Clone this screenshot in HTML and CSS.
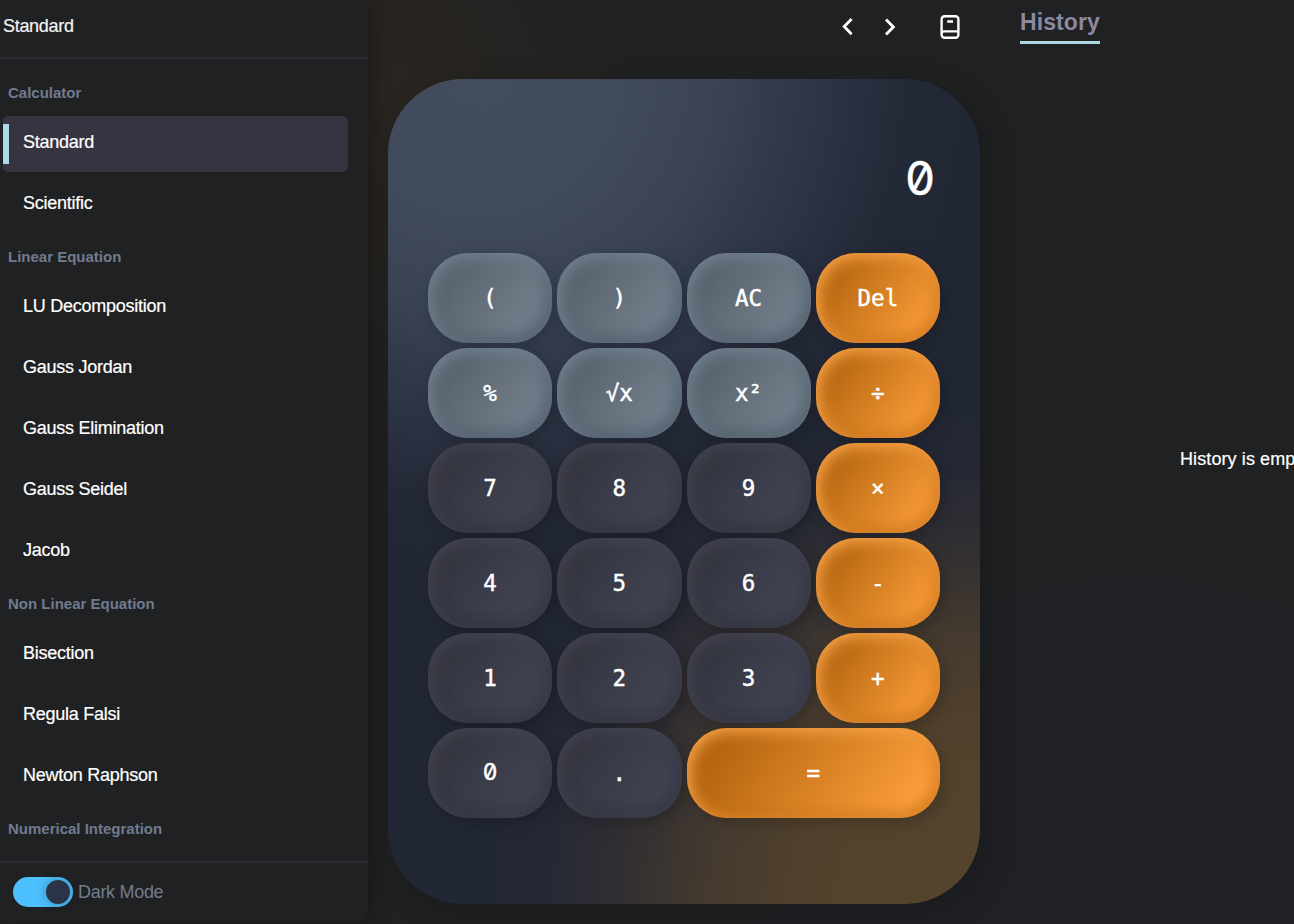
FILE: index.html
```html
<!DOCTYPE html>
<html lang="en">
<head>
<meta charset="utf-8">
<title>Calculator</title>
<link rel="stylesheet" href="styles.css">
</head>
<body>
<div class="app">
  <aside class="sidebar">
    <header class="sidebar-title">Standard</header>
    <nav class="menu">
      <h2 class="group">Calculator</h2>
      <a class="item active">Standard</a>
      <a class="item">Scientific</a>
      <h2 class="group">Linear Equation</h2>
      <a class="item">LU Decomposition</a>
      <a class="item">Gauss Jordan</a>
      <a class="item">Gauss Elimination</a>
      <a class="item">Gauss Seidel</a>
      <a class="item">Jacob</a>
      <h2 class="group">Non Linear Equation</h2>
      <a class="item">Bisection</a>
      <a class="item">Regula Falsi</a>
      <a class="item">Newton Raphson</a>
      <h2 class="group">Numerical Integration</h2>
    </nav>
    <footer class="mode">
      <span class="switch"><span class="knob"></span></span>
      <span class="mode-label">Dark Mode</span>
    </footer>
  </aside>

  <main class="center">
    <div class="toolbar">
      <svg class="icon" viewBox="0 0 24 24"><path d="M15.600 4 8.200 11.600l7.400 7.600"/></svg>
      <svg class="icon icon-next" viewBox="0 0 24 24"><path d="M9 4.600 16.400 12l-7.400 7.600"/></svg>
      <svg class="icon icon-book" viewBox="0 0 24 28"><path d="M6.600 3.200h10.800a3 3 0 0 1 3 3v15.600a3 3 0 0 1-3 3H6.600a3 3 0 0 1-3-3V6.200a3 3 0 0 1 3-3ZM3.600 20.600a2.400 2.400 0 0 1 2.400-2.200h14.400M9.200 8.500h5.800"/></svg>
    </div>
    <section class="calculator">
      <div class="display zero">0</div>
      <div class="keys">
        <button class="key grey">(</button><button class="key grey">)</button><button class="key grey">AC</button><button class="key orange">Del</button>
        <button class="key grey">%</button><button class="key grey">√x</button><button class="key grey">x²</button><button class="key orange">÷</button>
        <button class="key">7</button><button class="key">8</button><button class="key">9</button><button class="key orange">×</button>
        <button class="key">4</button><button class="key">5</button><button class="key">6</button><button class="key orange">-</button>
        <button class="key">1</button><button class="key">2</button><button class="key">3</button><button class="key orange">+</button>
        <button class="key zero">0</button><button class="key">.</button><button class="key orange wide">=</button>
      </div>
    </section>
  </main>

  <aside class="history">
    <h1 class="history-title">History</h1>
    <p class="history-empty">History is empty</p>
  </aside>
</div>
</body>
</html>
```
FILE: styles.css
```css
* { box-sizing: border-box; }

body {
  margin: 0;
  height: 924px;
  overflow: hidden;
  background: #202122;
  color: #fff;
  font-family: "Liberation Sans", Arial, sans-serif;
}

.app {
  display: flex;
  height: 924px;
  background:
    radial-gradient(circle 330px at 330px 110px, #2b2620, rgba(43, 38, 32, 0)),
    radial-gradient(circle 560px at 1130px 950px, #202126, rgba(32, 33, 38, 0)),
    #202122;
}

/* Sidebar */
.sidebar {
  display: flex;
  flex-direction: column;
  flex: none;
  width: 368px;
  height: 922px;
  background: #202122;
  border-radius: 0 0 10px 0;
  box-shadow: 5px 0 20px rgba(0, 0, 0, .28);
}

.sidebar-title {
  flex: none;
  height: 59px;
  padding: 16px 3px 0;
  border-bottom: 2px solid #2a2b32;
  color: #f1f1f1;
  font-size: 18px;
  line-height: 21px;
  letter-spacing: -.3px;
  -webkit-text-stroke: .2px;
}

.menu {
  flex: 1;
  min-height: 0;
  overflow: hidden;
  padding: 9.5px 20px 0 3px;
}

.group {
  height: 42px;
  margin: 0;
  padding: 15px 5px 0;
  color: #707b90;
  font-size: 15px;
  line-height: 17px;
}

.item {
  display: flex;
  align-items: center;
  height: 56px;
  margin-bottom: 5px;
  padding: 0 0 2px 20px;
  border-radius: 5px;
  font-size: 18px;
  letter-spacing: -.26px;
  -webkit-text-stroke: .2px;
}

.group + .item { margin-top: 5px; }
.item + .group { margin-top: -5px; }

.active {
  position: relative;
  background: #353440;
}

.active::before {
  content: "";
  position: absolute;
  left: 0;
  top: 8px;
  width: 6px;
  height: 40px;
  background: #add8e6;
}

.mode {
  display: flex;
  align-items: center;
  flex: none;
  gap: 5px;
  height: 61px;
  padding: 0 13px 1px;
  border-top: 2px solid #2a2b32;
}

.switch {
  display: flex;
  align-items: center;
  justify-content: flex-end;
  width: 60px;
  height: 30px;
  padding: 0 3px;
  border-radius: 15px;
  background: #4dc0ff;
}

.knob {
  width: 24px;
  height: 24px;
  border-radius: 50%;
  background: #2b3446;
  box-shadow: 0 0 12px rgba(0, 0, 0, .3);
}

.mode-label {
  color: #707b90;
  font-size: 18px;
  letter-spacing: -.3px;
}

/* Calculator */
.center {
  flex: none;
  width: 612px;
  padding-left: 20px;
}

.toolbar {
  display: flex;
  justify-content: flex-end;
  align-items: center;
  height: 78.5px;
  padding: 0 18px 24.5px 0;
}

.icon {
  width: 24px;
  height: 24px;
  fill: none;
  stroke: #fff;
  stroke-width: 2.8;
}

.icon-next { margin-left: 17px; }

.icon-book {
  height: 28px;
  margin-left: 37px;
  stroke-width: 2.4;
}

.calculator {
  width: 592px;
  height: 825px;
  padding: 0 40px;
  border-radius: 75px;
  background:
    radial-gradient(circle 500px at 90px -10px, #444d5e 0%, #414a5b 30%, rgba(60, 69, 86, .93) 48%, rgba(50, 58, 74, .65) 70%, rgba(38, 44, 58, .25) 87%, rgba(34, 39, 52, 0) 100%),
    radial-gradient(circle 500px at 100% 100%, #55442d 0%, #52412c 35%, rgba(72, 60, 46, .9) 54%, rgba(60, 52, 48, .6) 72%, rgba(46, 44, 50, .25) 87%, rgba(34, 39, 52, 0) 100%),
    #222735;
  box-shadow: 8px 8px 30px rgba(0, 0, 0, .22);
}

.display {
  height: 174px;
  padding: 70.5px 5px 0 0;
  font-size: 47px;
  line-height: 58px;
  text-align: right;
}

.zero {
  font-feature-settings: "zero" 1;
}

.keys {
  display: grid;
  grid-template-columns: repeat(4, 1fr);
  grid-auto-rows: 90px;
  gap: 5px;
}

.key {
  padding: 0;
  border: 0;
  border-radius: 40px;
  background: linear-gradient(125deg, #32333d 10%, #454859 100%);
  box-shadow:
    inset 4px 4px 15px rgba(82, 82, 97, .55),
    inset -5px -5px 15px rgba(40, 41, 50, .55),
    4px 4px 15px rgba(0, 0, 0, .22);
  color: #fff;
  font-family: "DejaVu Sans Mono", monospace;
  font-size: 22.5px;
  -webkit-text-stroke: .45px;
}

.grey {
  background: linear-gradient(125deg, #555f68 10%, #7a8795 100%);
  box-shadow:
    inset 4px 4px 15px rgba(124, 139, 157, .8),
    inset -5px -5px 15px rgba(70, 82, 95, .8),
    4px 4px 15px rgba(0, 0, 0, .2);
}

.orange {
  background: linear-gradient(125deg, #b0620d 10%, #ffa03c 92%);
  box-shadow:
    inset 4px 4px 15px rgba(255, 170, 80, .9),
    inset -4px -4px 14px rgba(190, 105, 18, .8),
    4px 4px 15px rgba(0, 0, 0, .2);
}

.wide { grid-column: span 2; }

.display.zero,
.key.zero {
  font-family: Inter, sans-serif;
  -webkit-text-stroke: .5px;
}

.key.zero { padding-bottom: 2px; }

/* History */
.history {
  flex: 1;
  min-width: 0;
  overflow: hidden;
  padding: 8px 0 0 40px;
}

.history-title {
  width: 80px;
  height: 35.5px;
  margin: 0;
  border-bottom: 3px solid #add8e6;
  color: #8b88a0;
  font-size: 23px;
  line-height: 28px;
  letter-spacing: .1px;
}

.history-empty {
  margin: 405.4px 0 0 160px;
  font-size: 18px;
  line-height: 21px;
  white-space: nowrap;
  letter-spacing: .1px;
  -webkit-text-stroke: .2px;
}
```
